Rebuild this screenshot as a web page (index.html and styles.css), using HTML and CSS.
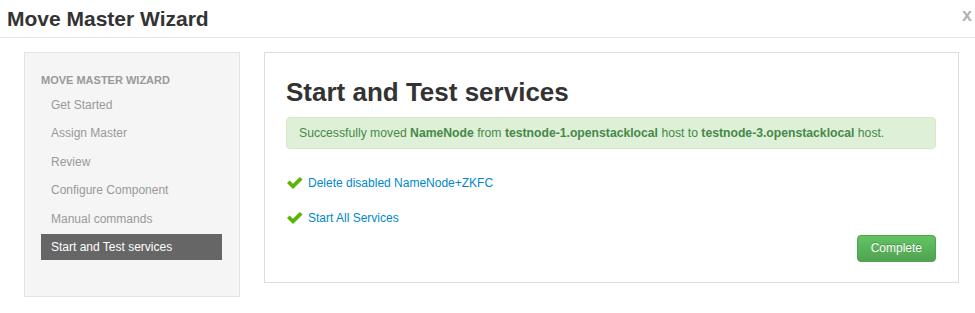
FILE: index.html
```html
<!DOCTYPE html>
<html lang="en">
<head>
  <meta charset="UTF-8">
  <title>Move Master Wizard</title>
  <link rel="stylesheet" href="styles.css">
</head>
<body>
  <header class="modal-header">
    <h3>Move Master Wizard</h3>
    <span class="close">x</span>
  </header>

  <div class="wizard">
    <div class="wizard-nav">
      <div class="nav-header">MOVE MASTER WIZARD</div>
      <ul class="nav-list">
        <li>Get Started</li>
        <li>Assign Master</li>
        <li>Review</li>
        <li>Configure Component</li>
        <li>Manual commands</li>
        <li class="active">Start and Test services</li>
      </ul>
    </div>

    <div class="wizard-content">
      <h2>Start and Test services</h2>
      <div class="alert">
        Successfully moved <b>NameNode</b> from <b>testnode-1.openstacklocal</b> host to <b>testnode-3.openstacklocal</b> host.
      </div>

      <div class="tasks">
        <div class="task">
          <svg class="icon-ok" viewBox="0 0 16 12"><path d="M0 6 L2.6 3.4 L6 6.8 L12.8 0 L15.6 2.6 L6 12 Z"/></svg>
          <a href="#">Delete disabled NameNode+ZKFC</a>
        </div>
        <div class="task">
          <svg class="icon-ok" viewBox="0 0 16 12"><path d="M0 6 L2.6 3.4 L6 6.8 L12.8 0 L15.6 2.6 L6 12 Z"/></svg>
          <a href="#">Start All Services</a>
        </div>
      </div>

      <div class="actions">
        <button class="btn-success">Complete</button>
      </div>
    </div>
  </div>
</body>
</html>
```

FILE: styles.css
```css
body {
  font-family: "Liberation Sans", Arial, sans-serif;
  font-size: 12px;
  margin: 0;
  padding: 0;
  background-color: #fff;
  color: #333;
}

.modal-header {
  display: flex;
  justify-content: space-between;
  align-items: flex-start;
  height: 37px;
  padding: 0 3px 0 7px;
  border-bottom: 1px solid #e5e5e5;
}

.modal-header h3 {
  margin: 0;
  font-size: 21px;
  line-height: 37px;
  font-weight: bold;
  color: #333;
}

.close {
  font-size: 18px;
  font-weight: bold;
  line-height: 30px;
  color: #b3b3b3;
}

.wizard {
  display: flex;
  align-items: flex-start;
  gap: 24px;
  padding: 14px 16px 0 24px;
}

.wizard-nav {
  width: 181px;
  padding: 18px 17px 36px 16px;
  background-color: #f5f5f5;
  border: 1px solid #e3e3e3;
}

.nav-header {
  font-size: 11px;
  font-weight: bold;
  line-height: 18px;
  color: #999;
  margin-bottom: 3px;
}

.nav-list {
  list-style: none;
  margin: 0;
  padding: 0;
}

.nav-list li {
  padding: 4px 10px;
  line-height: 18px;
  color: #999;
  margin-bottom: 2.4px;
}

.nav-list li:last-child {
  margin-bottom: 0;
}

.nav-list li.active {
  background-color: #666;
  color: #fff;
}

.wizard-content {
  flex: 1;
  padding: 24px 22px 20px 21px;
  border: 1px solid #ddd;
}

.wizard-content h2 {
  margin: 0 0 10px;
  font-size: 26px;
  line-height: 30px;
  color: #333;
}

.alert {
  padding: 6px 12px;
  line-height: 18px;
  font-size: 12.2px;
  color: #468847;
  background-color: #dff0d8;
  border: 1px solid #d6e9c6;
  border-radius: 4px;
  margin-bottom: 25px;
}

.tasks {
  display: flex;
  flex-direction: column;
  gap: 17px;
  margin-bottom: 8px;
}

.task {
  display: flex;
  align-items: center;
  gap: 5px;
  line-height: 18px;
  padding-left: 1px;
}

.task a {
  color: #0088cc;
  text-decoration: none;
}

.icon-ok {
  width: 16px;
  height: 12px;
  fill: #5ab400;
}

.actions {
  display: flex;
  justify-content: flex-end;
}

.btn-success {
  font-family: inherit;
  font-size: 12px;
  line-height: 19px;
  padding: 3px 13px;
  color: #fff;
  background-color: #5bb75b;
  background-image: linear-gradient(to bottom, #62c462, #51a351);
  border: 1px solid #51a351;
  border-radius: 4px;
  text-shadow: 0 -1px 0 rgba(0, 0, 0, 0.25);
}
```
